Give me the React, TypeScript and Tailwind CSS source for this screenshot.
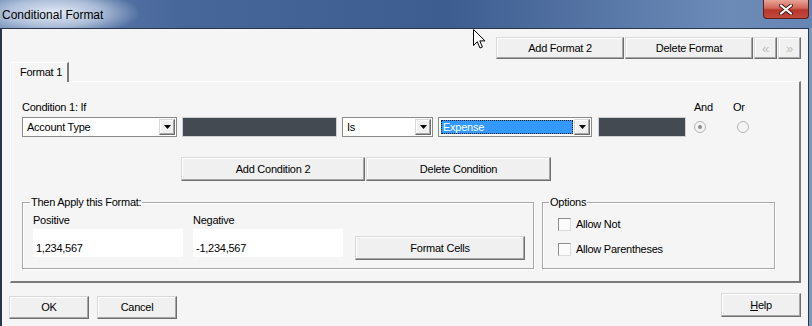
import clsx from 'clsx';

// ── Small Win32-style primitives ───────────────────────────────────────────

const RAISED =
  'flex items-center justify-center bg-[#f0f0f0] border border-t-[#d9d9d9] border-l-[#d9d9d9] border-r-[#6f6f6f] border-b-[#6f6f6f] shadow-[inset_-1px_-1px_0_#a6a6a6,inset_1px_1px_0_#ffffff]';

function Button({ className, children }: { className?: string; children: React.ReactNode }) {
  return <div className={clsx(RAISED, className)}>{children}</div>;
}

function Arrow() {
  return (
    <svg width="7" height="4" viewBox="0 0 7 4">
      <path d="M0 0h7L3.5 4z" fill="#000" />
    </svg>
  );
}

function Combo({ value, className, selected }: { value: string; className?: string; selected?: boolean }) {
  return (
    <div className={clsx('flex h-[20px] bg-white border border-[#8a8a8a] p-[1px]', className)}>
      <div className="flex-1 flex p-[1px]">
        <div
          className={clsx(
            'flex-1 flex items-center pl-[2px]',
            selected && 'bg-[#3399ff] text-white outline-1 outline-dotted outline-[#1a1a1a] -outline-offset-1',
          )}
        >
          {value}
        </div>
      </div>
      <div className={clsx(RAISED, 'w-[16px] h-full')}>
        <Arrow />
      </div>
    </div>
  );
}

function DarkBox({ className }: { className?: string }) {
  return <div className={clsx('h-[20px] bg-[#434a51] border border-[#cfcfcf]', className)} />;
}

function Radio({ checked }: { checked?: boolean }) {
  return (
    <div className="w-[12px] h-[12px] rounded-full border border-[#b5b5b5] bg-[#f4f4f4] flex items-center justify-center">
      {checked && <div className="w-[4px] h-[4px] rounded-full bg-[#8a8a8a]" />}
    </div>
  );
}

function Check({ label }: { label: string }) {
  return (
    <div className="flex items-center h-[13px]">
      <div className="w-[13px] h-[13px] bg-[#fbfbfb] border border-t-[#8e8e8e] border-l-[#8e8e8e] border-r-[#dcdcdc] border-b-[#dcdcdc]" />
      <span className="ml-[5px]">{label}</span>
    </div>
  );
}

// ── Dialog ────────────────────────────────────────────────────────────────

export default function App() {
  return (
    <div className="relative w-[812px] h-[326px] overflow-hidden flex flex-col bg-[#7d98bf] font-['Liberation_Sans',Arial,sans-serif] text-[11px] leading-[13px] tracking-[-0.25px] text-black">
      {/* Title bar */}
      <div className="h-[28px] flex items-start bg-[radial-gradient(ellipse_85px_24px_at_55px_13px,rgba(226,234,246,1),rgba(226,234,246,0.6)_55%,rgba(226,234,246,0)_100%),linear-gradient(90deg,#6a87b4_0%,#47669a_22%,#3d5c90_55%,#5c7cab_78%,#6d8bb7_90%,#6585b3_100%)]">
        <span className="ml-[2px] mt-[8px] text-[12px] leading-[14px] tracking-normal text-black">Conditional Format</span>
        <div className="ml-auto mr-[3px] w-[46px] h-[19px] rounded-b-[4px] border border-t-0 border-[#5f1d17] bg-[linear-gradient(180deg,#e8a497_0%,#d2675a_45%,#b8362a_55%,#c24a3c_100%)] flex items-center justify-center">
          <svg width="14" height="11" viewBox="0 0 14 11">
            <path d="M2 1.5L12 9.5M12 1.5L2 9.5" stroke="#4a1a15" strokeWidth="4" strokeLinecap="round" />
            <path d="M2 1.5L12 9.5M12 1.5L2 9.5" stroke="#ffffff" strokeWidth="2.2" strokeLinecap="round" />
          </svg>
        </div>
      </div>

      {/* Client area */}
      <div className="w-[809px] flex-1 flex flex-col bg-[#f5f5f5] border-t border-l-2 border-r border-[#27344a]">
        {/* Format buttons */}
        <div className="mt-[8px] pr-[7px] flex justify-end gap-[1px]">
          <Button className="w-[128px] h-[22px]">Add Format 2</Button>
          <Button className="w-[128px] h-[22px]">Delete Format</Button>
          <Button className="w-[23px] h-[22px] text-[#b9c2b9] text-[13px]">«</Button>
          <Button className="w-[23px] h-[22px] text-[#b9c2b9] text-[13px]">»</Button>
        </div>

        {/* Tab header */}
        <div className="mt-[3px] ml-[8px] relative z-10 -mb-px w-[59px] h-[20px] whitespace-nowrap bg-[#f5f5f5] border-l border-t border-white rounded-tl-[2px] border-r-2 border-r-[#7a7a7a] pl-[9px] pt-[3px]">
          Format 1
        </div>

        {/* Tab panel */}
        <div className="ml-[8px] mr-[7px] h-[202px] flex flex-col border-t border-l border-white border-r-2 border-b-2 border-r-[#7a7a7a] border-b-[#7a7a7a] pl-[11px]">
          <div className="mt-[19px] flex">
            <span className="w-[672px]">Condition 1: If</span>
            <span className="w-[39px]">And</span>
            <span>Or</span>
          </div>

          <div className="mt-[3px] flex items-center">
            <Combo value="Account Type" className="w-[155px]" />
            <DarkBox className="ml-[5px] w-[155px]" />
            <Combo value="Is" className="ml-[5px] w-[91px]" />
            <Combo value="Expense" selected className="ml-[5px] w-[154px]" />
            <DarkBox className="ml-[6px] w-[88px]" />
            <div className="ml-[8px]">
              <Radio checked />
            </div>
            <div className="ml-[31px]">
              <Radio />
            </div>
          </div>

          <div className="mt-[20px] ml-[159px] flex gap-[1px]">
            <Button className="w-[184px] h-[24px]">Add Condition 2</Button>
            <Button className="w-[185px] h-[24px]">Delete Condition</Button>
          </div>

          <div className="mt-[14px] flex items-start">
            <fieldset className="w-[512px] h-[74px] border border-[#a8a8a8] shadow-[inset_1px_1px_0_#ffffff,1px_1px_0_#ffffff] pl-[10px]">
              <legend className="-ml-[3px] px-[1px] leading-[14px]">Then Apply this Format:</legend>
              <div className="mt-[5px] flex items-start">
                <div className="flex flex-col">
                  <span>Positive</span>
                  <div className="mt-[2px] w-[150px] h-[28px] bg-white pl-[3px] pt-[13px]">1,234,567</div>
                </div>
                <div className="ml-[10px] flex flex-col">
                  <span>Negative</span>
                  <div className="mt-[2px] w-[150px] h-[28px] bg-white pl-[3px] pt-[13px]">-1,234,567</div>
                </div>
                <Button className="ml-[12px] mt-[22px] w-[170px] h-[24px]">Format Cells</Button>
              </div>
            </fieldset>

            <fieldset className="ml-[8px] w-[233px] h-[74px] border border-[#a8a8a8] shadow-[inset_1px_1px_0_#ffffff,1px_1px_0_#ffffff] pl-[15px]">
              <legend className="-ml-[9px] px-[1px] leading-[14px]">Options</legend>
              <div className="mt-[9px] flex flex-col gap-[12px]">
                <Check label="Allow Not" />
                <Check label="Allow Parentheses" />
              </div>
            </fieldset>
          </div>
        </div>

        {/* Dialog buttons */}
        <div className="flex items-start pl-[7px] pr-[7px]">
          <Button className="mt-[13px] w-[80px] h-[23px]">OK</Button>
          <Button className="mt-[13px] ml-[8px] w-[80px] h-[23px]">Cancel</Button>
          <Button className="mt-[10px] ml-auto w-[80px] h-[24px]">
            <span>
              <span className="underline">H</span>elp
            </span>
          </Button>
        </div>
      </div>

      {/* Mouse pointer */}
      <svg className="absolute left-[473px] top-[29px]" width="13" height="20" viewBox="0 0 13 20">
        <path d="M0.5 0.5V16.5L4.3 12.8L7 19L9.4 18L6.8 11.9H12Z" fill="#ffffff" stroke="#000000" strokeWidth="1" strokeLinejoin="round" />
      </svg>
    </div>
  );
}
